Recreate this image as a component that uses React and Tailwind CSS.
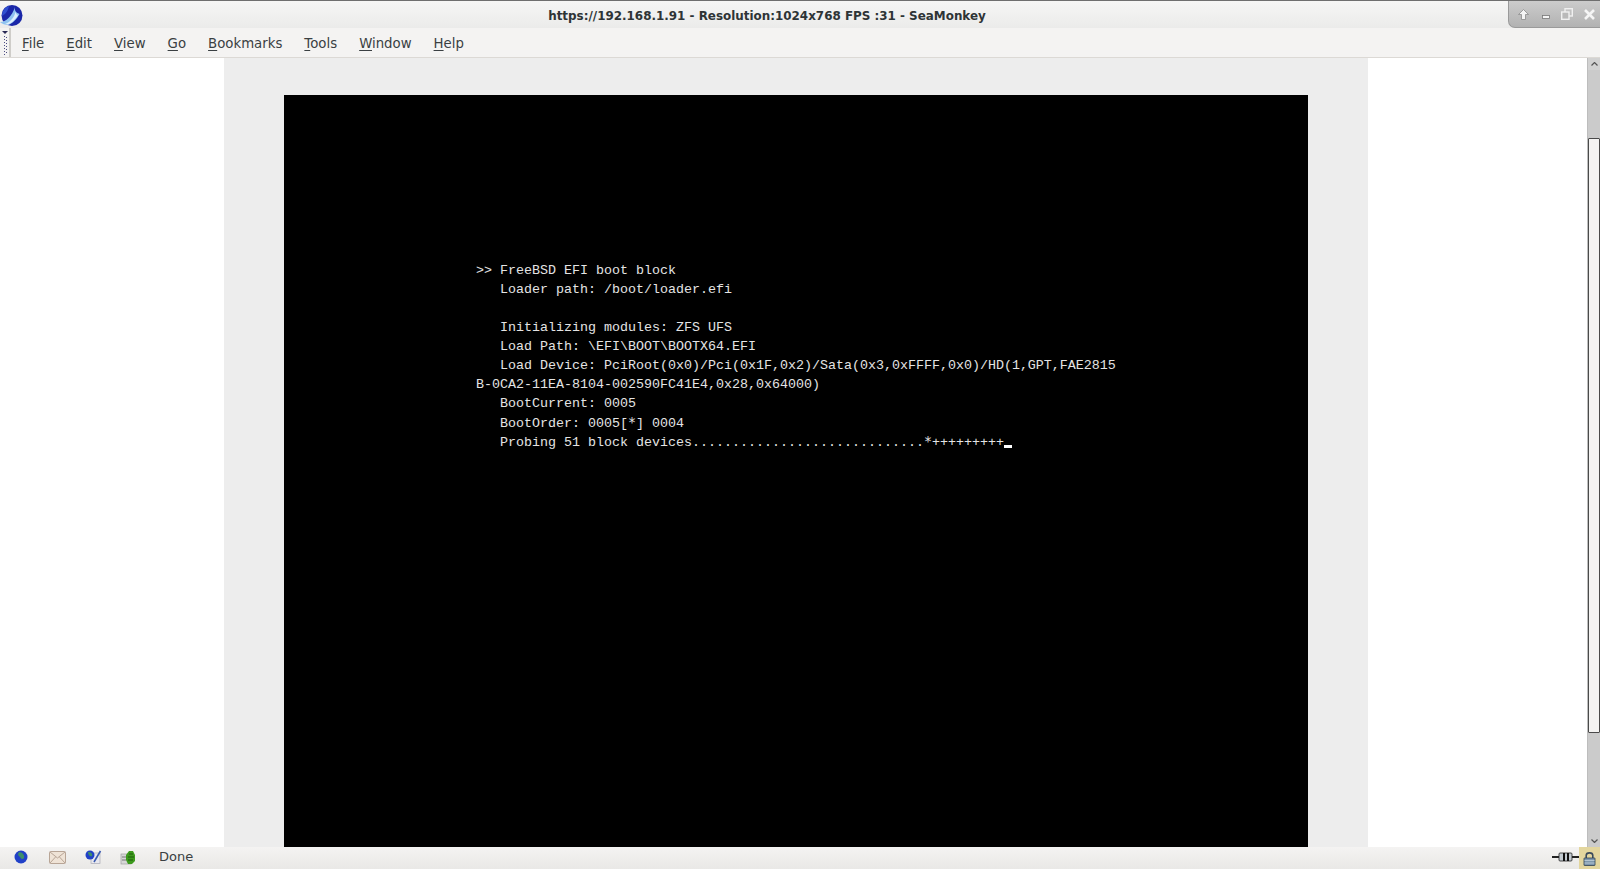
import React from "react";

const sans = "font-['DejaVu_Sans',sans-serif]";

function Logo() {
  return (
    <svg width="23" height="23" viewBox="0 0 23 23">
      <circle cx="12" cy="11.5" r="10.5" fill="#1a27a8" />
      <path d="M9 2 C5 3 2 7 2 12 C4 11 8 8 9 2Z" fill="#2f4fd0" />
      <path d="M0 18 C6 18 12 12 15 3 C14 7 17 9 19.5 10 C17 15 12 20 8 21 C5 21 2 20 0 18Z" fill="#8fc3f0" />
      <path d="M5 20 C10 18 14 14 15.5 8 C16 10 17 11 18 11 C16 15 12 19 8 20.5Z" fill="#dff0fd" />
    </svg>
  );
}

function WinButtons() {
  return (
    <div className="absolute right-0 top-0 h-[27px] w-[92px] rounded-bl-[7px] border-l border-b border-[#9a9a9a] bg-gradient-to-b from-[#cccccc] to-[#b2b2b2] flex items-center">
      <svg width="11" height="11" viewBox="0 0 11 11" className="ml-[9px]"><path d="M5.5 0.5 L10.5 5.5 H7.5 V10.5 H3.5 V5.5 H0.5Z" fill="#f5f5f5" stroke="#8b8b8b" strokeWidth="0.8" /></svg>
      <svg width="8" height="12" viewBox="0 0 8 12" className="ml-[13px]"><rect x="0.5" y="7.5" width="7" height="3" fill="#f5f5f5" stroke="#777" strokeWidth="0.8" /></svg>
      <svg width="12" height="12" viewBox="0 0 12 12" className="ml-[11px]"><rect x="4" y="0.7" width="7.3" height="7.3" fill="none" stroke="#f0f0f0" strokeWidth="1.4" /><rect x="0.7" y="4" width="7.3" height="7.3" fill="#b9b9b9" stroke="#f0f0f0" strokeWidth="1.4" /></svg>
      <svg width="11" height="11" viewBox="0 0 11 11" className="ml-[11px]"><path d="M1 1 L10 10 M10 1 L1 10" stroke="#f5f5f5" strokeWidth="2.6" /></svg>
    </div>
  );
}

function U({ k, r }) {
  return (
    <span className="mr-[22px]">
      <span className="underline underline-offset-2">{k}</span>{r}
    </span>
  );
}

function Star() {
  return <span className="font-['DejaVu_Sans_Mono',monospace] text-[13.28px]">*</span>;
}

const lines = [
  ">> FreeBSD EFI boot block",
  "   Loader path: /boot/loader.efi",
  "",
  "   Initializing modules: ZFS UFS",
  "   Load Path: \\EFI\\BOOT\\BOOTX64.EFI",
  "   Load Device: PciRoot(0x0)/Pci(0x1F,0x2)/Sata(0x3,0xFFFF,0x0)/HD(1,GPT,FAE2815",
  "B-0CA2-11EA-8104-002590FC41E4,0x28,0x64000)",
  "   BootCurrent: 0005",
];

function Terminal() {
  return (
    <div className="w-[1024px] h-[768px] shrink-0 bg-black pl-[192px] pt-[166px] text-[#e4e4e4] font-['Liberation_Mono',monospace] text-[13.33px] leading-[19px] whitespace-pre">
      {lines.map((l, i) => (
        <div key={i} className="h-[19px]">{l}</div>
      ))}
      <div className="h-[19px]">{"   BootOrder: 0005["}<Star />{"] 0004"}</div>
      <div className="h-[19px] flex">
        <span>{"   Probing 51 block devices............................."}<Star />{"+++++++++"}</span>
        <span className="w-[8px] h-[3px] bg-white mt-[13px]" />
      </div>
    </div>
  );
}

function Scrollbar() {
  return (
    <div className="w-[13px] shrink-0 bg-[#cbcbcb] border-l border-[#bdbdbd] flex flex-col items-center">
      <div className="h-[12px] w-full flex items-center justify-center bg-[#d2d2d2]">
        <svg width="7" height="4" viewBox="0 0 7 4"><path d="M0.5 3.5 L3.5 0.5 L6.5 3.5" fill="none" stroke="#555" strokeWidth="1.2" /></svg>
      </div>
      <div className="h-[68px] shrink-0" />
      <div className="w-[12px] h-[595px] shrink-0 bg-[#f4f3f2] border border-[#4a4a4a] rounded-[1px]" />
      <div className="flex-1" />
      <div className="h-[12px] w-full flex items-center justify-center">
        <svg width="7" height="4" viewBox="0 0 7 4"><path d="M0.5 0.5 L3.5 3.5 L6.5 0.5" fill="none" stroke="#555" strokeWidth="1.2" /></svg>
      </div>
    </div>
  );
}

function Globe() {
  return (
    <svg width="14" height="14" viewBox="0 0 14 14">
      <circle cx="7" cy="7" r="6.5" fill="#2141c8" />
      <path d="M5 2 C8 2 11 5 10 8 C9 10 7 9 6 7 C5 6 3 5 5 2Z" fill="#3e8f6a" />
    </svg>
  );
}
function Mail() {
  return (
    <svg width="18" height="13" viewBox="0 0 18 13">
      <rect x="0.5" y="0.5" width="16" height="12" rx="1" fill="#efe3d6" stroke="#b8a596" />
      <path d="M1 1 L8.5 7 L16 1 M1 12 L6.5 6 M16 12 L10.5 6" fill="none" stroke="#b8a596" />
    </svg>
  );
}
function Compose() {
  return (
    <svg width="17" height="14" viewBox="0 0 17 14">
      <rect x="6" y="3" width="9" height="10.5" fill="#e8e8ee" stroke="#a9a9b5" strokeWidth="0.7" />
      <circle cx="5" cy="5" r="4.5" fill="#2141c8" />
      <path d="M3 2 C6 2 8 4 7 6 C5 7 3 5 3 2Z" fill="#3e8f6a" />
      <path d="M9 12 L15.5 1" stroke="#3a5ab0" strokeWidth="1.6" />
    </svg>
  );
}
function Composer() {
  return (
    <svg width="16" height="15" viewBox="0 0 16 15">
      <rect x="1" y="4" width="10" height="10" fill="#d7d7d7" stroke="#a0a0a0" strokeWidth="0.7" />
      <path d="M2 7 H8 M2 10 H6" stroke="#777" />
      <path d="M9 1 L13 1 L15 5 L15 11 L12 14 L8 14 L6 10 L6 5Z" fill="#3d9a1d" />
      <path d="M9 4 H13 M8 7 H14 M8 10 H13" stroke="#1e5d0d" />
    </svg>
  );
}
function Plug() {
  return (
    <svg width="27" height="10" viewBox="0 0 27 10">
      <rect x="0" y="4" width="8" height="2" fill="#222" />
      <rect x="19" y="4" width="8" height="2" fill="#222" />
      <rect x="7" y="1" width="13" height="8" rx="1" fill="#c3cbd1" stroke="#222" strokeWidth="0.8" />
      <rect x="11" y="1" width="2" height="8" fill="#111" />
      <rect x="15" y="1" width="2" height="8" fill="#111" />
    </svg>
  );
}
function Lock() {
  return (
    <svg width="13" height="15" viewBox="0 0 13 15">
      <path d="M3.2 7 V4.5 C3.2 1 9.8 1 9.8 4.5 V7" fill="none" stroke="#3b4b5c" strokeWidth="1.6" />
      <rect x="1" y="7" width="11" height="7.5" rx="0.5" fill="#7d97ad" stroke="#2f3f50" strokeWidth="0.8" />
      <path d="M1.5 9.5 H11.5 M1.5 12 H11.5" stroke="#c3d1dc" strokeWidth="0.8" />
    </svg>
  );
}

function Grip() {
  return (
    <div className="w-[11px] h-[29px] shrink-0 border-r-2 border-[#cfcdc9]">
      <svg width="9" height="29" viewBox="0 0 9 29">
        <path d="M2 3 H8 L5 6Z" fill="#2a2a55" />
        <path d="M4.5 8 V27 M6.5 9 V27" stroke="#4a4a80" strokeWidth="1" strokeDasharray="1 2" />
      </svg>
    </div>
  );
}

export default function App() {
  return (
    <div className={`w-[1600px] h-[869px] flex flex-col overflow-hidden bg-white ${sans}`}>
      <header className="relative h-[28px] shrink-0 border-t border-[#6f6f6f] bg-gradient-to-b from-[#f6f6f5] to-[#ebebea] flex items-center">
        <div className="absolute left-0 top-[3px]"><Logo /></div>
        <div className="flex-1 text-center text-[11.93px] font-bold text-[#2e3436] pr-[66px] pt-[5px]">
          https://192.168.1.91 - Resolution:1024x768 FPS :31 - SeaMonkey
        </div>
        <WinButtons />
      </header>

      <nav className="h-[30px] shrink-0 bg-[#f4f3f2] border-b border-[#dcd9d5] flex items-center text-[13.3px] text-[#3a3f42]">
        <Grip />
        <div className="pl-[11px] pt-[2px] flex">
          <U k="F" r="ile" />
          <U k="E" r="dit" />
          <U k="V" r="iew" />
          <U k="G" r="o" />
          <U k="B" r="ookmarks" />
          <U k="T" r="ools" />
          <U k="W" r="indow" />
          <U k="H" r="elp" />
        </div>
      </nav>

      <main className="flex-1 min-h-0 flex overflow-hidden">
        <div className="w-[224px] shrink-0 bg-white" />
        <div className="w-[1144px] shrink-0 bg-[#ededed] pl-[60px] pt-[37px] flex">
          <Terminal />
        </div>
        <div className="flex-1 bg-white" />
        <Scrollbar />
      </main>

      <footer className="h-[22px] shrink-0 pb-[2px] bg-gradient-to-b from-[#f4f3f2] to-[#e9e8e6] flex items-center text-[13px] text-[#3a3f42]">
        <div className="ml-[14px]"><Globe /></div>
        <div className="ml-[21px]"><Mail /></div>
        <div className="ml-[18px]"><Compose /></div>
        <div className="ml-[18px]"><Composer /></div>
        <span className="ml-[23px]">Done</span>
        <div className="flex-1" />
        <Plug />
        <div className="w-[21px] h-[22px] -mb-[2px] bg-[#e3d69e] flex items-center justify-center"><Lock /></div>
      </footer>
    </div>
  );
}
